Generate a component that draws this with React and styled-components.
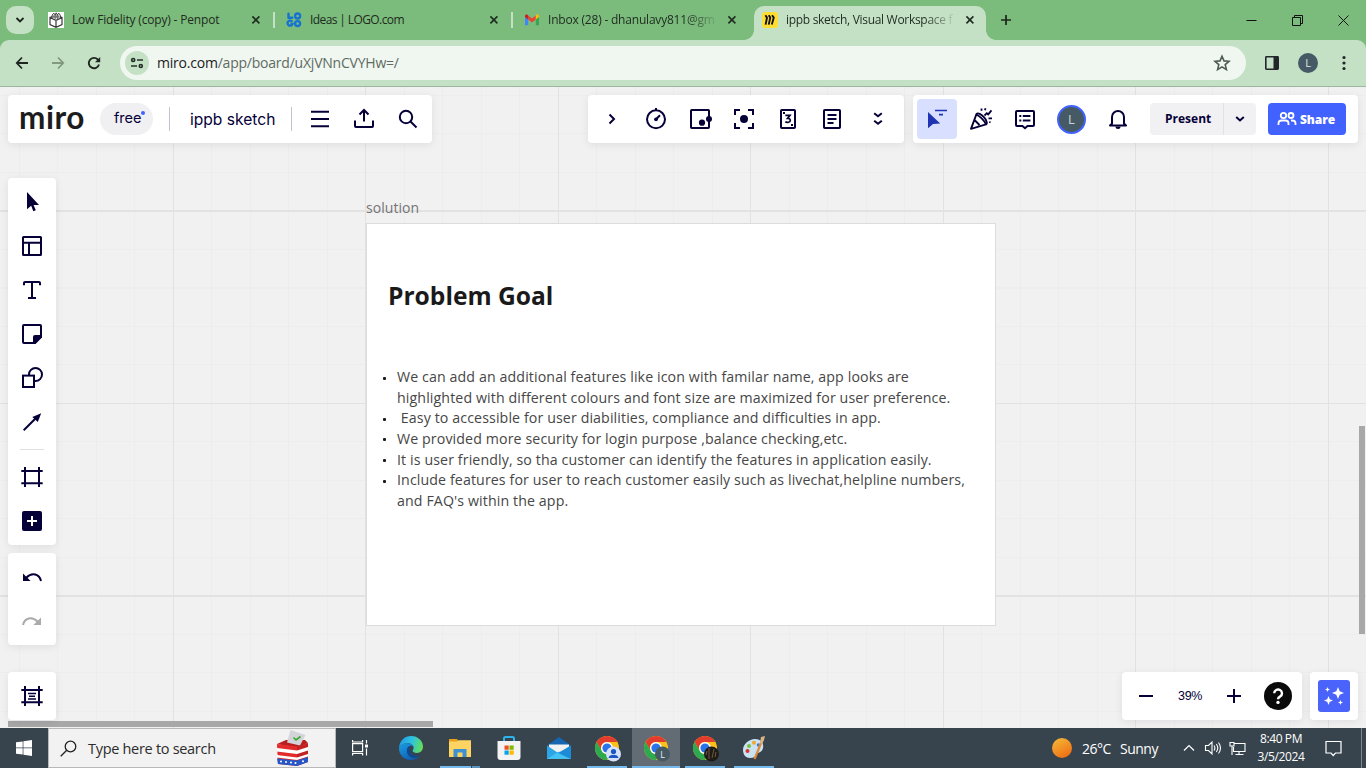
import React from "react";
import styled, { createGlobalStyle, css } from "styled-components";

const ink = "#050038";

const GlobalStyle = createGlobalStyle`
  * { box-sizing: border-box; }
  html, body { margin: 0; padding: 0; overflow: hidden; }
  body { font-family: "Open Sans", "Noto Sans", sans-serif; }
  svg { display: block; flex: none; }
`;

const Window = styled.div`
  width: 1366px;
  height: 768px;
  display: flex;
  flex-direction: column;
  background: #7bbc7c;
`;

/* ---------- browser chrome ---------- */

const TabStrip = styled.div`
  height: 40px;
  flex: none;
  display: flex;
  align-items: center;
  background: #7bbc7c;
  padding-left: 6px;
`;

const TabSearch = styled.div`
  width: 28px;
  height: 28px;
  border-radius: 10px;
  background: #c5e1c5;
  display: flex;
  align-items: center;
  justify-content: center;
  margin-right: 3px;
`;

const Tab = styled.div`
  position: relative;
  width: 238px;
  height: 40px;
  display: flex;
  align-items: center;
  padding-left: 11px;
  ${(p) =>
    p.$separator &&
    css`
      background: linear-gradient(#c5e1c5, #c5e1c5) right center / 2px 16px no-repeat;
    `}
`;

const ActiveTab = styled(Tab)`
  &::before {
    content: "";
    position: absolute;
    inset: 6px 3px 0 3px;
    background: #c5e1c5;
    border-radius: 10px 10px 0 0;
  }
  &::after {
    content: "";
    position: absolute;
    left: -7px;
    right: -7px;
    bottom: 0;
    height: 10px;
    background:
      radial-gradient(circle at 0 0, transparent 9.5px, #c5e1c5 10.2px) left / 10px 10px no-repeat,
      radial-gradient(circle at 100% 0, transparent 9.5px, #c5e1c5 10.2px) right / 10px 10px no-repeat;
  }
  & > * { position: relative; z-index: 1; }
`;

const Favicon = styled.span`
  width: 16px;
  height: 16px;
  margin-right: 8px;
  flex: none;
`;

const TabTitle = styled.span`
  width: 171px;
  height: 20px;
  line-height: 20px;
  white-space: nowrap;
  font-size: 12px;
  letter-spacing: ${(p) => p.$track || 0}px;
  color: #1f2a20;
  ${(p) => p.$fade && css`mask-image: linear-gradient(to right, #000 138px, transparent 171px);`}
`;

const TabClose = styled.span`
  margin-left: 8px;
`;

const NewTab = styled.div`
  width: 34px;
  display: flex;
  justify-content: center;
`;

const WindowControls = styled.div`
  margin-left: auto;
  display: flex;
`;

const WindowButton = styled.div`
  width: 46px;
  display: flex;
  justify-content: center;
`;

const AddressRow = styled.div`
  height: 47px;
  flex: none;
  display: flex;
  align-items: center;
  background: #c5e1c5;
  border-bottom: 1px solid #9db79f;
  border-radius: 9px 9px 0 0;
  padding: 0 4px;
`;

const NavButton = styled.div`
  width: 36px;
  display: flex;
  justify-content: center;
`;

const Omnibox = styled.div`
  width: 1126px;
  height: 34px;
  margin-left: 8px;
  margin-right: 8px;
  border-radius: 17px;
  background: #f0f7f1;
  display: flex;
  align-items: center;
  padding: 0 15px 0 5px;
`;

const SiteInfo = styled.div`
  width: 24px;
  height: 24px;
  border-radius: 50%;
  background: #c5e1c5;
  display: flex;
  align-items: center;
  justify-content: center;
`;

const Url = styled.div`
  flex: 1;
  margin-left: 8px;
  padding-bottom: 1px;
  font-size: 14px;
  letter-spacing: -0.22px;
  color: #5f6b62;
  b { font-weight: 400; color: #1c211d; }
`;

const ProfileDot = styled.div`
  width: 20px;
  height: 20px;
  border-radius: 50%;
  background: #455a64;
  color: #e3e8ea;
  font-size: 11px;
  line-height: 20px;
  text-align: center;
`;

const ToolbarSlot = styled.div`
  width: 36px;
  display: flex;
  justify-content: center;
`;

/* ---------- board ---------- */

const Board = styled.main`
  position: relative;
  height: 641px;
  flex: none;
  overflow: hidden;
  background:
    repeating-linear-gradient(to right, #e2e2e2 0 1px, transparent 1px 192.5px) -19.6px 0 / 1500px 100%,
    repeating-linear-gradient(to bottom, #e2e2e2 0 1px, transparent 1px 192.5px) 0 -69px / 100% 900px,
    repeating-linear-gradient(to right, #ededed 0 1px, transparent 1px 38.5px) -19.6px 0 / 1500px 100%,
    repeating-linear-gradient(to bottom, #ededed 0 1px, transparent 1px 38.5px) 0 -69px / 100% 900px,
    #f1f1f1;
`;

const FrameLabel = styled.div`
  position: absolute;
  left: 366px;
  top: 111px;
  font-size: 14px;
  line-height: 20px;
  letter-spacing: 0.05px;
  color: #757575;
`;

const Frame = styled.section`
  position: absolute;
  left: 366px;
  top: 136px;
  width: 630px;
  height: 403px;
  background: #fff;
  border: 1px solid #dcdcdc;
  padding: 53px 20px 0 21px;
`;

const FrameTitle = styled.h1`
  margin: 0;
  font-size: 24.6px;
  line-height: 38px;
  font-weight: 700;
  color: #1a1a1a;
`;

const Bullets = styled.ul`
  list-style: none;
  margin: 52px 0 0 -5px;
  padding: 0;
  font-size: 14.2px;
  letter-spacing: 0.11px;
  line-height: 20.62px;
  color: #464646;
`;

const Bullet = styled.li`
  display: flex;
  white-space: pre;
  &::before {
    content: "";
    width: 3px;
    height: 3px;
    border-radius: 1px;
    background: #1a1a1a;
    margin: 9.5px 11px 0 0;
  }
`;

const Overlay = styled.div`
  position: absolute;
  inset: 0;
  display: flex;
  flex-direction: column;
  padding: 8px 8px 0;
`;

const TopRow = styled.div`
  display: flex;
  height: 48px;
`;

const Panel = styled.div`
  background: #fff;
  border-radius: 4px;
  box-shadow: 0 2px 8px rgba(5, 0, 56, 0.08);
  display: flex;
  align-items: center;
`;

const HeaderPanel = styled(Panel)`
  width: 424px;
  padding-left: 11px;
  margin-right: 156px;
`;

const AppsPanel = styled(Panel)`
  width: 316px;
  padding-left: 2px;
  margin-right: 9px;
`;

const CollabPanel = styled(Panel)`
  width: 445px;
  padding-left: 4px;
`;

const Wordmark = styled.div`
  width: 81px;
  font-family: Lato, sans-serif;
  font-weight: 700;
  font-size: 31.5px;
  line-height: 42px;
  padding-bottom: 5px;
  color: #1c1c1e;
  letter-spacing: 0.5px;
`;

const PlanBadge = styled.div`
  position: relative;
  width: 53px;
  height: 32px;
  border-radius: 16px;
  background: #f0f0f3;
  font-family: Inter, sans-serif;
  font-size: 14.5px;
  line-height: 30px;
  padding-left: 14px;
  color: ${ink};
  &::after {
    content: "";
    position: absolute;
    left: 41px;
    top: 8px;
    width: 4px;
    height: 4px;
    border-radius: 50%;
    background: #4262ff;
  }
`;

const BoardName = styled.div`
  font-family: Inter, sans-serif;
  font-size: 15.6px;
  width: 101px;
  color: ${ink};
`;

const VRule = styled.div`
  width: 1px;
  height: 24px;
  background: #c3c2cf;
  margin-left: ${(p) => p.$before || 0}px;
  margin-right: ${(p) => p.$after || 0}px;
`;

const ToolSlot = styled.div`
  width: ${(p) => p.$w || 44}px;
  height: 44px;
  display: flex;
  align-items: center;
  justify-content: center;
`;

const ToolActive = styled(ToolSlot)`
  width: 40px;
  height: 40px;
  border-radius: 4px;
  background: #d9dfff;
  margin-right: 2px;
`;

const Avatar = styled.div`
  width: 29px;
  height: 29px;
  border-radius: 50%;
  border: 2.5px solid #4262ff;
  background: #455a64;
  color: #ccd4d8;
  font-size: 13px;
  line-height: 24px;
  text-align: center;
`;

const SplitButton = styled.div`
  width: 106px;
  height: 32px;
  border-radius: 4px;
  background: #f1f1f3;
  display: flex;
  align-items: center;
  margin: 0 12px 0 10px;
  font-size: 12px;
  font-weight: 700;
  color: ${ink};
`;

const SplitLabel = styled.div`
  width: 74px;
  height: 32px;
  line-height: 32px;
  padding-left: 15px;
  border-right: 1px solid #e1e1e6;
`;

const SplitCaret = styled.div`
  width: 32px;
  display: flex;
  justify-content: center;
`;

const ShareButton = styled.div`
  width: 78px;
  height: 32px;
  border-radius: 4px;
  background: #4262ff;
  color: #fff;
  font-size: 12px;
  font-weight: 800;
  letter-spacing: -0.1px;
  display: flex;
  align-items: center;
  padding-left: 9px;
  gap: 3px;
`;

const SideColumn = styled.div`
  width: 48px;
  display: flex;
  flex-direction: column;
`;

const ToolRail = styled(Panel)`
  flex-direction: column;
  margin-top: ${(p) => p.$top}px;
  height: ${(p) => p.$h}px;
  padding-top: 2px;
`;

const RailRule = styled.div`
  width: 24px;
  height: 1px;
  background: #dedee3;
  margin: 5px 0;
`;

const BottomRow = styled.div`
  display: flex;
  height: 48px;
  margin-top: 27px;
`;

const FramesPanel = styled(Panel)`
  width: 48px;
  justify-content: center;
  margin-right: auto;
`;

const ZoomPanel = styled(Panel)`
  width: 180px;
  margin-right: 8px;
  padding-left: 2px;
`;

const ZoomValue = styled.div`
  width: 44px;
  text-align: center;
  font-family: "Liberation Sans", Arial, sans-serif;
  font-size: 12.5px;
  letter-spacing: -0.4px;
  color: ${ink};
`;

const HelpButton = styled.div`
  width: 28px;
  height: 28px;
  border-radius: 50%;
  background: #0a0a0a;
  display: flex;
  align-items: center;
  justify-content: center;
`;

const AiPanel = styled(Panel)`
  width: 48px;
  justify-content: center;
`;

const AiButton = styled.div`
  width: 32px;
  height: 32px;
  border-radius: 3px;
  background: #4a63fb;
  display: flex;
  align-items: center;
  justify-content: center;
`;

const ScrollThumb = styled.div`
  position: absolute;
  background: #a8a8a8;
  ${(p) =>
    p.$vertical
      ? css`right: 1px; top: 339px; width: 6px; height: 208px;`
      : css`left: 8px; bottom: 1px; width: 425px; height: 6px;`}
`;

/* ---------- taskbar ---------- */

const Taskbar = styled.footer`
  height: 40px;
  flex: none;
  display: flex;
  align-items: stretch;
  background: #37444d;
  color: #fff;
`;

const StartButton = styled.div`
  width: 48px;
  display: flex;
  align-items: center;
  justify-content: center;
`;

const SearchBox = styled.div`
  width: 288px;
  background: #f2f2f2;
  border: 1px solid #b8b8b8;
  display: flex;
  align-items: center;
  padding-left: 11px;
  color: #2c2c2c;
  font-size: 14.5px;
  letter-spacing: -0.3px;
  span { width: 187px; margin-left: 11px; }
`;

const TaskButton = styled.div`
  width: ${(p) => p.$w || 49}px;
  display: flex;
  align-items: center;
  justify-content: center;
  background-color: ${(p) => (p.$active ? "#636c74" : "transparent")};
  ${(p) =>
    p.$line &&
    css`
      background-image: ${p.$grouped
        ? "linear-gradient(to right, #76b9ed 31px, #37444d 31px 32px, #5b93bf 32px)"
        : "linear-gradient(#76b9ed, #76b9ed)"};
      background-size: ${p.$line}px 2px;
      background-position: center bottom;
      background-repeat: no-repeat;
    `}
`;

const Tray = styled.div`
  margin-left: auto;
  display: flex;
  align-items: center;
`;

const Weather = styled.div`
  display: flex;
  align-items: center;
  font-size: 14px;
  letter-spacing: -0.5px;
  width: 125px;
  i {
    width: 20px;
    height: 20px;
    border-radius: 50%;
    background: linear-gradient(150deg, #f3bd3a, #f0640f);
    margin-right: 10px;
  }
  span { width: 38px; }
`;

const TraySlot = styled.div`
  width: 24px;
  display: flex;
  justify-content: center;
`;

const Clock = styled.div`
  width: 64px;
  font-size: 12px;
  line-height: 18px;
  letter-spacing: -0.4px;
  text-align: center;
`;

const Notifications = styled.div`
  width: 41px;
  display: flex;
  justify-content: center;
  margin-right: 7px;
`;

const ShowDesktop = styled.div`
  width: 5px;
  height: 40px;
  border-left: 1px solid #7f878d;
`;

/* ---------- icons ---------- */

function Icon({ s = 24, w, h, c = ink, sw = 2, fill = "none", children }) {
  const W = w || s;
  const H = h || s;
  return (
    <svg width={W} height={H} viewBox={`0 0 ${W} ${H}`} fill={fill} stroke={c} strokeWidth={sw}>
      {children}
    </svg>
  );
}

const CloseX = () => (
  <Icon s={10} c="#1f2a20" sw={1.6}>
    <path d="M1.4 1.4l7 7M8.4 1.4l-7 7" />
  </Icon>
);

const PenpotMark = () => (
  <Icon s={16} c="#3b3b3b" sw={1.2}>
    <path d="M0 0h16v16H0z" fill="#fff" stroke="none" />
    <path d="M2 5.6v7L8 15.3l6-2.7v-7L8 8.3zM8 8.3v7M2 5.6l2-1M14 5.6l-2-1" />
    <path d="M4.2 6V3l1.6-1.8L7.2 3v3.8M7.2 3L8.2.8 9.4 3v3.8M9.4 3l1.4-1.8L12.2 3v3" strokeWidth="1" />
    <path d="M5 3.4h6v2.4H5z" fill="#777" stroke="none" />
  </Icon>
);

const LogoComMark = () => (
  <Icon s={16} c="#1673d1" sw={2.4}>
    <path d="M2.500 1.800v3.900h3.700" strokeLinecap="round" strokeLinejoin="round" />
    <circle cx="11.600" cy="4" r="2.500" />
    <circle cx="11.600" cy="11.600" r="2.500" />
    <path d="M6.200 9.800A2.500 2.500 0 1 0 6.400 12H4.400" />
  </Icon>
);

const GmailMark = () => (
  <Icon s={16} c="none">
    <path d="M1 4v9.200h3.200V6.500z" fill="#4285f4" />
    <path d="M15 4v9.200h-3.200V6.500z" fill="#34a853" />
    <path d="M4.200 3.400L8 6.400l3.800-3v4.200L8 10.500 4.200 7.600z" fill="#ea4335" />
    <path d="M1 5V4c0-1.600 1.600-2 2.600-1.200l.6.500v4.200z" fill="#c5221f" />
    <path d="M15 5V4c0-1.600-1.600-2-2.600-1.200l-.6.500v4.200z" fill="#fbbc04" />
  </Icon>
);

const MiroMark = () => (
  <Icon s={16} c="#111" sw={1.9}>
    <rect width="16" height="16" rx="3" fill="#ffdd33" stroke="none" />
    <path d="M3.400 3.200l1.600 2.400-1.400 7M6.700 3.200l1.600 2.400-1.600 7M10 3.200l1.800 2.400-2 7" strokeLinejoin="bevel" />
  </Icon>
);

const Timer = () => (
  <Icon>
    <circle cx="12" cy="12.300" r="9" />
    <path d="M12 1v3M12 12.300l4-4" />
    <circle cx="12" cy="12.300" r="1.900" fill={ink} stroke="none" />
  </Icon>
);

const FramePath = () => <path d="M5 2v20M19 2v20M1.300 6h21.400M1.300 18.300h21.400" />;

const Edge = () => (
  <svg width="26" height="26" viewBox="0 0 26 26">
    <defs>
      <linearGradient id="edgeTop" x1="0" y1="0.4" x2="1" y2="0.6">
        <stop offset="0" stopColor="#1f9be6" />
        <stop offset="0.5" stopColor="#2fc3df" />
        <stop offset="1" stopColor="#66e052" />
      </linearGradient>
      <linearGradient id="edgeLow" x1="0" y1="0" x2="0.7" y2="1">
        <stop offset="0" stopColor="#1b9de2" />
        <stop offset="1" stopColor="#0f5bb0" />
      </linearGradient>
    </defs>
    <path d="M1 12.500C1.600 5.800 6.600 1 13.200 1 20 1 25 6 25 11.700c0 3.700-2.600 6.200-6 6.200-2.800 0-4.400-1-4.400-2.100 0-.8 1-1.200 1-3C15.600 10.300 13 8.300 9.800 8.300 5.600 8.300 2.300 10.200 1 12.500z" fill="url(#edgeTop)" />
    <path d="M1 12.500C2.300 10.200 5.500 8.300 9.500 8.300c2.600 0 5 1.200 5.900 3.200-.9-.7-2-.9-3-.7-2.400.500-3.700 3-3.500 5.500.3 4 4 7 8.100 6.500 2-.2 3.700-1.200 4.900-2.200C20.300 23.200 17 25 13 25 6 25 .5 19.500 1 12.500z" fill="url(#edgeLow)" />
    <path d="M12.400 10.800c-2.400.5-3.700 3-3.500 5.500.3 4 4 7 8.100 6.500 2-.2 3.700-1.200 4.900-2.200-5.200 1.400-10.300-1.200-10.300-6 0-1.500.300-2.900.8-3.800z" fill="#0c4a92" />
  </svg>
);

const Chrome = ({ children }) => (
  <svg width="28" height="28" viewBox="-1 0 28 28">
    <circle cx="13" cy="14" r="12" fill="#fbc116" />
    <path d="M2.600 8A12 12 0 0 1 23.400 8H13a6 6 0 0 0-5.300 9z" fill="#e33b2e" />
    <path d="M2.600 8A12 12 0 0 0 13 26l5.200-9a6 6 0 0 1-10.400 0z" fill="#2da94f" />
    <circle cx="13" cy="14" r="6" fill="#fff" />
    <circle cx="13" cy="14" r="4.600" fill="#2a73e8" />
    {children}
  </svg>
);

const tools = [
  <Icon c="none"><path d="M7 2v17.300l4.200-3.600 2.100 5.600 2.500-1-2.200-5.300H19z" fill={ink} /></Icon>,
  <Icon><rect x="3" y="3" width="18" height="18" rx=".5" /><path d="M3 8.700h18M9 8.700V21" /></Icon>,
  <Icon><path d="M4 7.300V5a1 1 0 0 1 1-1h14a1 1 0 0 1 1 1v2.300M12 4v16M8 20h8" /></Icon>,
  <Icon>
    <path d="M21 14V4a1 1 0 0 0-1-1H4a1 1 0 0 0-1 1v16a1 1 0 0 0 1 1h10.500z" />
    <path d="M13 21.500V15a2 2 0 0 1 2-2h7v2.500L15.500 22H13z" fill={ink} stroke="none" />
  </Icon>,
  <Icon><circle cx="15.500" cy="8.500" r="6.500" /><rect x="3" y="9.600" width="11" height="11.400" fill="#fff" /></Icon>,
  <Icon><path d="M3.700 20.300L16 8" /><path d="M21.200 3.200L12.300 7l5.500 5z" fill={ink} stroke="none" /></Icon>,
];

export default function App() {
  return (
    <Window>
      <GlobalStyle />
      <TabStrip>
        <TabSearch>
          <Icon s={10} c="#1c241d" sw={1.800}><path d="M1.500 3l3.500 3.500L8.500 3" /></Icon>
        </TabSearch>
        <Tab $separator>
          <Favicon><PenpotMark /></Favicon>
          <TabTitle $track={-0.18}>Low Fidelity (copy) - Penpot</TabTitle>
          <TabClose><CloseX /></TabClose>
        </Tab>
        <Tab $separator>
          <Favicon><LogoComMark /></Favicon>
          <TabTitle $track={-0.6}>Ideas | LOGO.com</TabTitle>
          <TabClose><CloseX /></TabClose>
        </Tab>
        <Tab>
          <Favicon><GmailMark /></Favicon>
          <TabTitle $fade $track={-0.2}>Inbox (28) - dhanulavy811@gm</TabTitle>
          <TabClose><CloseX /></TabClose>
        </Tab>
        <ActiveTab>
          <Favicon><MiroMark /></Favicon>
          <TabTitle $fade $track={-0.3}>ippb sketch, Visual Workspace f</TabTitle>
          <TabClose><CloseX /></TabClose>
        </ActiveTab>
        <NewTab>
          <Icon s={12} c="#1c241d" sw={1.700}><path d="M6 1v10M1 6h10" /></Icon>
        </NewTab>
        <WindowControls>
          <WindowButton><Icon s={11} c="#111" sw={1}><path d="M.500 5.500h10" /></Icon></WindowButton>
          <WindowButton><Icon s={11} c="#111" sw={1}><path d="M.500 2.500h8v8h-8zM2.500 2.500v-2h8v8h-2" /></Icon></WindowButton>
          <WindowButton><Icon s={11} c="#111" sw={1}><path d="M.500.500l10 10M10.500.500l-10 10" /></Icon></WindowButton>
        </WindowControls>
      </TabStrip>

      <AddressRow>
        <NavButton><Icon s={14} c="#1f2620" sw={1.800}><path d="M13 7H2M7 1.500L1.800 7 7 12.500" /></Icon></NavButton>
        <NavButton><Icon s={14} c="#82987f" sw={1.800}><path d="M1 7h11M7 1.500L12.200 7 7 12.500" /></Icon></NavButton>
        <NavButton>
          <Icon s={14} c="#1f2620" sw={1.900}>
            <path d="M12 8.500A5.200 5.200 0 1 1 10.800 3.500l1.400 1.300" />
            <path d="M13.200 1v5.200H8z" fill="#1f2620" stroke="none" />
          </Icon>
        </NavButton>
        <Omnibox>
          <SiteInfo>
            <Icon s={14} c="#26302a" sw={1.700}>
              <circle cx="3.200" cy="4" r="1.500" /><path d="M7 4h6M1 10h6" /><circle cx="10.800" cy="10" r="1.500" />
            </Icon>
          </SiteInfo>
          <Url><b>miro.com</b>/app/board/uXjVNnCVYHw=/</Url>
          <Icon s={18} c="#4f5a52" sw={1.600}>
            <path d="M9 2.200l2 4.700 5 .4-3.800 3.300 1.200 5L9 12.900l-4.400 2.700 1.200-5L2 7.300l5-.4z" />
          </Icon>
        </Omnibox>
        <ToolbarSlot>
          <Icon s={16} c="#20262a" sw={1.600}><rect x="1.800" y="1.800" width="12.400" height="12.400" rx=".6" /><path d="M9.500 2h4.500v12H9.500z" fill="#20262a" stroke="none" /></Icon>
        </ToolbarSlot>
        <ToolbarSlot><ProfileDot>L</ProfileDot></ToolbarSlot>
        <ToolbarSlot>
          <Icon w={4} h={16} c="none" fill="#20262a"><circle cx="2" cy="2.500" r="1.600" /><circle cx="2" cy="8" r="1.600" /><circle cx="2" cy="13.500" r="1.600" /></Icon>
        </ToolbarSlot>
      </AddressRow>

      <Board>
        <FrameLabel>solution</FrameLabel>
        <Frame>
          <FrameTitle>Problem Goal</FrameTitle>
          <Bullets>
            <Bullet>{"We can add an additional features like icon with familar name, app looks are\nhighlighted with different colours and font size are maximized for user preference."}</Bullet>
            <Bullet>{" Easy to accessible for user diabilities, compliance and difficulties in app."}</Bullet>
            <Bullet>{"We provided more security for login purpose ,balance checking,etc."}</Bullet>
            <Bullet>{"It is user friendly, so tha customer can identify the features in application easily."}</Bullet>
            <Bullet>{"Include features for user to reach customer easily such as livechat,helpline numbers,\nand FAQ's within the app."}</Bullet>
          </Bullets>
        </Frame>

        <ScrollThumb />
        <ScrollThumb $vertical />

        <Overlay>
          <TopRow>
            <HeaderPanel>
              <Wordmark>miro</Wordmark>
              <PlanBadge>free</PlanBadge>
              <VRule $before={16} $after={20} />
              <BoardName>ippb sketch</BoardName>
              <VRule $after={6} />
              <ToolSlot><Icon><path d="M3 4.700h18M3 12h18M3 19.300h18" /></Icon></ToolSlot>
              <ToolSlot><Icon><path d="M3 13.500V19a1 1 0 0 0 1 1h16a1 1 0 0 0 1-1v-5.500M12 3.500v11M7.500 7.500L12 3l4.500 4.500" /></Icon></ToolSlot>
              <ToolSlot><Icon><circle cx="10" cy="10" r="6.200" /><path d="M14.500 14.500l6 6" /></Icon></ToolSlot>
            </HeaderPanel>

            <AppsPanel>
              <ToolSlot><Icon><path d="M9.500 7.500L14 12l-4.500 4.500" /></Icon></ToolSlot>
              <ToolSlot><Timer /></ToolSlot>
              <ToolSlot>
                <Icon>
                  <rect x="3" y="3" width="18" height="18" rx=".8" />
                  <g fill={ink} stroke="none"><circle cx="14" cy="15.700" r="3.100" /><circle cx="21" cy="12" r="3" /></g>
                </Icon>
              </ToolSlot>
              <ToolSlot>
                <Icon><path d="M8 3H3v5M16 3h5v5M8 21H3v-5M16 21h5v-5" /><circle cx="12" cy="12" r="4" fill={ink} stroke="none" /></Icon>
              </ToolSlot>
              <ToolSlot>
                <Icon>
                  <rect x="5" y="3" width="14" height="18" rx=".8" />
                  <path d="M9.300 8.400h4.700l-2.400 3c1.700-.1 2.700.8 2.700 2 0 1.900-3.200 2.600-5 1.400" strokeWidth="1.700" />
                  <path d="M7 5h2v2H7zM15 17h2v2h-2z" fill={ink} stroke="none" />
                </Icon>
              </ToolSlot>
              <ToolSlot><Icon><rect x="4" y="3" width="16" height="18" rx=".8" /><path d="M7.500 8h9M7.500 12h9M7.500 16h6" /></Icon></ToolSlot>
              <ToolSlot $w={48}><Icon><path d="M8.200 6.300L12 9.300l3.800-3M8.200 13.800l3.800 3 3.800-3" /></Icon></ToolSlot>
            </AppsPanel>

            <CollabPanel>
              <ToolActive>
                <Icon c="#1f33b4"><path d="M3 5v16.300l5-4.300 7.200-.600z" fill="#1f33b4" stroke="none" /><path d="M10 3.500h12M14 7.700h4" strokeWidth="1.700" /></Icon>
              </ToolActive>
              <ToolSlot>
                <Icon sw={1.900}>
                  <path d="M2 21.800L7.300 7.500c3.800 2 7.600 5.700 9.700 9.800zM5.500 13l5 5" strokeLinejoin="round" />
                  <path d="M7.300 7.500c1-2.800 5.500.4 7.600 2.700s4 6.100 2.100 7.100" />
                  <path d="M15.500 8.500l2.300-2.300 1.400 1.200 3.300-4M12.500 1.500v2.300M16.500 1.200l-.5 2M19.500 11.300h3.500M21.500 15.500l-1.200-.7" strokeWidth="1.800" />
                </Icon>
              </ToolSlot>
              <ToolSlot>
                <Icon>
                  <path d="M4 4h16a1 1 0 0 1 1 1v13a1 1 0 0 1-1 1h-5.500L12 21.200 9.500 19H4a1 1 0 0 1-1-1V5a1 1 0 0 1 1-1z" />
                  <path d="M6.300 8.900h2M9.800 8.900h7.600M6.300 13.600h2M9.800 13.600h7.600" />
                </Icon>
              </ToolSlot>
              <ToolSlot $w={49}><Avatar>L</Avatar></ToolSlot>
              <ToolSlot>
                <Icon>
                  <path d="M6 16.500V10a6 6 0 0 1 12 0v6.500l2 2H4z" strokeLinejoin="round" />
                  <path d="M9.500 19.500h5a2.500 2.500 0 0 1-5 0z" fill={ink} stroke="none" />
                </Icon>
              </ToolSlot>
              <SplitButton>
                <SplitLabel>Present</SplitLabel>
                <SplitCaret><Icon s={10}><path d="M1.200 3l3.800 3.500L8.800 3" /></Icon></SplitCaret>
              </SplitButton>
              <ShareButton>
                <Icon w={20} h={16} c="#fff" sw={1.800}>
                  <circle cx="6.500" cy="4.500" r="2.700" /><circle cx="14" cy="4.500" r="2.500" />
                  <path d="M1.500 14v-1.500a3 3 0 0 1 3-3h4a3 3 0 0 1 3 3V14M14 9.500h1.500a3 3 0 0 1 3 3V14" />
                </Icon>
                Share
              </ShareButton>
            </CollabPanel>
          </TopRow>

          <SideColumn>
            <ToolRail $top={35} $h={367}>
              {tools.map((t, i) => <ToolSlot key={i}>{t}</ToolSlot>)}
              <RailRule />
              <ToolSlot><Icon><FramePath /></Icon></ToolSlot>
              <ToolSlot>
                <Icon><rect x="2" y="2" width="20" height="20" rx="2" fill={ink} stroke="none" /><path d="M12 7v10M7 12h10" stroke="#fff" /></Icon>
              </ToolSlot>
            </ToolRail>
            <ToolRail $top={8} $h={92}>
              <ToolSlot>
                <Icon><path d="M21 16c-1.400-7-9-9.300-14.500-3.500" /><path d="M3 8.500v7.600h7.600z" fill={ink} stroke="none" /></Icon>
              </ToolSlot>
              <ToolSlot>
                <Icon c="#aaa"><path d="M3 16c1.400-7 9-9.300 14.500-3.500" /><path d="M21 8.500v7.600h-7.600z" fill="#aaa" stroke="none" /></Icon>
              </ToolSlot>
            </ToolRail>
          </SideColumn>

          <BottomRow>
            <FramesPanel><Icon><FramePath /><path d="M8 9.500h8M9 12.200h6M8 15h8" strokeWidth="1.500" /></Icon></FramesPanel>
            <ZoomPanel>
              <ToolSlot><Icon><path d="M5 12h14" /></Icon></ToolSlot>
              <ZoomValue>39%</ZoomValue>
              <ToolSlot><Icon><path d="M5 12h14M12 5v14" /></Icon></ToolSlot>
              <ToolSlot>
                <HelpButton>
                  <Icon s={18} c="#fff" sw={2.400}>
                    <path d="M5.200 6.200a3.900 3.700 0 1 1 6 3.200C9.600 10.300 9 10.700 9 12.200" />
                    <circle cx="9" cy="15.400" r="1.700" fill="#fff" stroke="none" />
                  </Icon>
                </HelpButton>
              </ToolSlot>
            </ZoomPanel>
            <AiPanel>
              <AiButton>
                <Icon c="none" fill="#fff">
                  <path d="M16 3l1.700 4.300L22 9l-4.300 1.700L16 15l-1.700-4.300L10 9l4.300-1.700zM6.500 12l1.300 3.200L11 16.500l-3.200 1.300L6.500 21l-1.300-3.200L2 16.500l3.200-1.300zM5.500 3l.7 1.800L8 5.500l-1.800.7L5.500 8l-.7-1.800L3 5.500l1.800-.7zM18.500 16l.7 1.800 1.800.7-1.800.7-.7 1.800-.7-1.800-1.800-.7 1.800-.7z" />
                </Icon>
              </AiButton>
            </AiPanel>
          </BottomRow>
        </Overlay>
      </Board>

      <Taskbar>
        <StartButton>
          <Icon s={16} c="none" fill="#fff"><path d="M0 2.300L6.700 1.400v6.200H0zM7.400 1.300L16 0v7.600H7.400zM0 8.300h6.700v6.300L0 13.700zM7.400 8.300H16V16l-8.600-1.200z" /></Icon>
        </StartButton>
        <SearchBox>
          <Icon s={17} c="#222" sw={1.300}><circle cx="10.500" cy="6.500" r="5.300" /><path d="M6.700 10.300L.7 16.300" /></Icon>
          <span>Type here to search</span>
          <svg width="34" height="38" viewBox="0 0 34 38">
            <path d="M2 15l9-4h19l3 3-12 5z" fill="#b81f1f" />
            <path d="M15.500 1l15 5-5.500 10.500L12 13.500z" fill="#d3d3da" />
            <path d="M18.500 8.500l2.500 2.500 4.500-3.500" stroke="#37a82c" strokeWidth="1.600" fill="none" />
            <path d="M2 15l20 2.500V37L3 35z" fill="#e42b2b" />
            <path d="M22 17.500l11-3.500v19l-11 4z" fill="#c32222" />
            <path d="M2 19l20 2.500v3.500L2 22.500zM22 21.500l11-3.500v3.500l-11 3.500zM2 26l20 2.500v2.500L2 28.500zM22 28.500l11-3.500v2.500l-11 3.500z" fill="#fff" />
            <path d="M2 29.500l20 2V37L3 35zM22 31.500L33 28v5l-11 4z" fill="#2657c9" />
            <g fill="#fff"><circle cx="6" cy="32.500" r="1" /><circle cx="11" cy="33" r="1" /><circle cx="16" cy="33.500" r="1" /><circle cx="20.500" cy="34" r="1" /><circle cx="28" cy="32.300" r="1" /></g>
          </svg>
        </SearchBox>
        <TaskButton $w={48}>
          <Icon s={18} c="#fff" sw={1.200}>
            <path d="M1.600 4.600h10v8h-10zM1.600 1v2h10V1M1.600 16.500v-2h10v2M15.500 1v3.500M15.500 9.500v7" /><path d="M14 5.500h3v3h-3z" fill="#fff" stroke="none" />
          </Icon>
        </TaskButton>
        <TaskButton $w={54}><Edge /></TaskButton>
        <TaskButton $w={44} $line={40} $grouped>
          <svg width="22" height="20" viewBox="0 0 22 20">
            <path d="M0 1h8l2 3h-10z" fill="#e9a11c" /><path d="M0 3.500h8l1.500-1.300H22V19H0z" fill="#fdd462" />
            <path d="M4.500 19v-8h13v8h-4v-4.500h-5V19z" fill="#3f8fd3" />
          </svg>
        </TaskButton>
        <TaskButton $w={53}>
          <svg width="24" height="24" viewBox="0 0 24 24">
            <path d="M7 6V2.500A1.500 1.500 0 0 1 8.500 1h7A1.500 1.500 0 0 1 17 2.500V6" fill="none" stroke="#2db4ec" strokeWidth="2" />
            <path d="M.5 5h23v16a3 3 0 0 1-3 3h-17a3 3 0 0 1-3-3z" fill="#f3f3f3" />
            <path d="M7.500 9.500h4.200v4.200H7.500z" fill="#f04e23" /><path d="M12.500 9.500h4.200v4.200h-4.200z" fill="#7fba00" />
            <path d="M7.500 14.500h4.200v4.200H7.500z" fill="#00a4ef" /><path d="M12.500 14.500h4.200v4.200h-4.200z" fill="#ffb900" />
          </svg>
        </TaskButton>
        <TaskButton $w={47}>
          <svg width="24" height="24" viewBox="0 0 24 24">
            <path d="M0 9.500L12 1l12 8.500z" fill="#1567b3" /><path d="M2 8.500h20v8H2z" fill="#f2f2f2" />
            <path d="M0 9.500l12 8 12-8V23H0z" fill="#2ca5e6" /><path d="M0 23l12-7.500L24 23z" fill="#44c2f2" /><path d="M24 9.500L11 17l13 6z" fill="#1c8bd8" />
          </svg>
        </TaskButton>
        <TaskButton $w={50} $line={40}>
          <Chrome><circle cx="19.500" cy="20" r="7.500" fill="#d6e2fb" /><circle cx="19.500" cy="17.500" r="2.600" fill="#1b57c0" /><path d="M14.500 24c0-4.500 10-4.500 10 0z" fill="#1b57c0" /></Chrome>
        </TaskButton>
        <TaskButton $w={48} $line={48} $active>
          <Chrome><circle cx="19.500" cy="20" r="7.500" fill="#455a64" /><text x="19.500" y="23.500" textAnchor="middle" fontSize="9" fill="#e8ecee">L</text></Chrome>
        </TaskButton>
        <TaskButton $w={50} $line={40}>
          <Chrome><circle cx="19.500" cy="20" r="7.500" fill="#1f1b17" /><path d="M17 14v11M15 17l-1 4M22 15l-2 9M24 18l-1 5" stroke="#6d5b3d" strokeWidth="1" /></Chrome>
        </TaskButton>
        <TaskButton $w={48} $line={40}>
          <svg width="26" height="26" viewBox="0 0 26 26">
            <path d="M2 15C2 9 8 4 14 4s9 4 8 9-5 4-6 6-3 4-7 4-7-3-7-8z" fill="#c9e3f3" />
            <circle cx="6.500" cy="16" r="2" fill="#d8352b" /><circle cx="8" cy="11" r="2" fill="#7bbf3c" /><circle cx="13" cy="7.800" r="2" fill="#f2a72c" /><circle cx="17.500" cy="10" r="1.800" fill="#3f78d3" />
            <path d="M13.500 24l7-17" stroke="#e08a35" strokeWidth="2.200" /><path d="M19 8l1-6 4-1-1 4-2 4z" fill="#dcb483" />
          </svg>
        </TaskButton>

        <Tray>
          <Weather><i /><span>26°C</span>Sunny</Weather>
          <TraySlot><Icon s={12} c="#fff" sw={1.200}><path d="M1 8.500l5-5 5 5" /></Icon></TraySlot>
          <TraySlot>
            <Icon w={18} h={16} c="#fff" sw={1.100}><path d="M1.500 5.500h3L8 2v12l-3.500-3.500h-3zM10 5.500q1.800 2.500 0 5M12.300 4q3 4 0 8M14.500 2.500q4 5.500 0 11" /></Icon>
          </TraySlot>
          <TraySlot>
            <Icon w={17} h={15} c="#fff" sw={1.100}><path d="M5.500 2.500h10.500v8H4.500V6M10 10.500v3M6.500 13.500h8M1 1.500h4v3.500H1zM3 5v9" /></Icon>
          </TraySlot>
          <Clock>8:40 PM<br />3/5/2024</Clock>
          <Notifications><Icon s={17} c="#fff" sw={1.200}><path d="M1 1.500h15v11.500h-5.500l-2.300 2.500L6 13H1z" /></Icon></Notifications>
          <ShowDesktop />
        </Tray>
      </Taskbar>
    </Window>
  );
}
